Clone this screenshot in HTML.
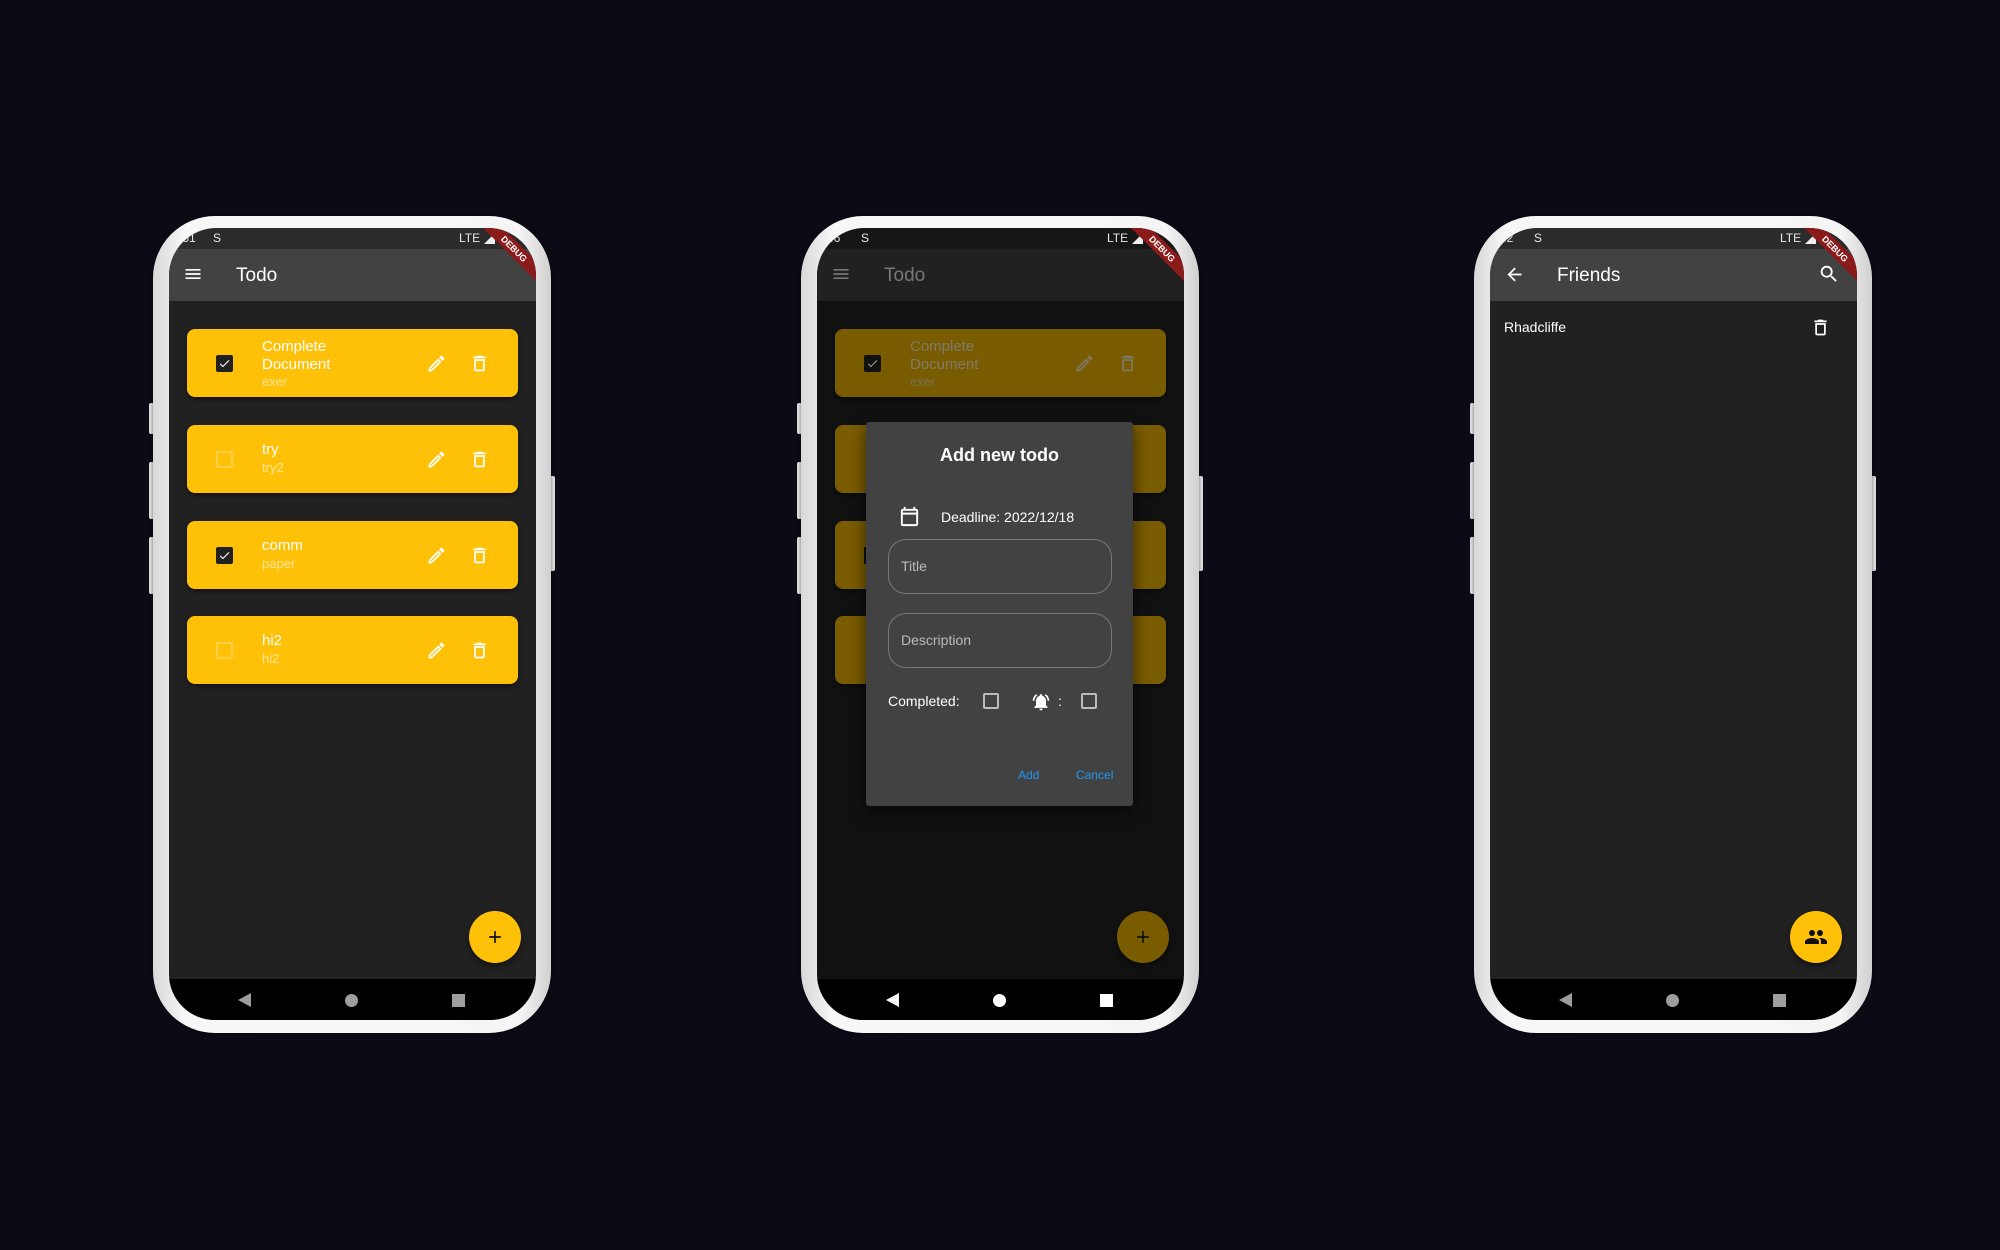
<!DOCTYPE html>
<html><head><meta charset="utf-8"><style>
*{margin:0;padding:0;box-sizing:border-box}
body{width:2000px;height:1250px;background:#0c0b15;position:relative;overflow:hidden;font-family:"Liberation Sans",Roboto,sans-serif}
.ph{position:absolute;top:0;width:700px;height:1250px}
.frame{position:absolute;left:153px;top:216px;width:398px;height:817px;border-radius:62px;background:linear-gradient(90deg,#d8d8d8,#f7f7f7 8%,#f5f5f5 92%,#d0d0d0);box-shadow:0 0 4px rgba(0,0,0,.5)}
.btn{position:absolute;background:#e4e4e4;width:5px;border-radius:2px}
.scr{position:absolute;left:169px;top:228px;width:367px;height:792px;border-radius:48px 48px 46px 46px;overflow:hidden;background:#212121}
.sb{position:absolute;left:0;top:0;width:367px;height:21px;background:#2b2b2b;color:#e8e8e8;font-size:12px}
.ab{position:absolute;left:0;top:21px;width:367px;height:52px;background:#424242;color:#fff}
.ab .t{position:absolute;left:67px;top:16px;font-size:19px}
.nav{position:absolute;left:0;bottom:0;width:367px;height:41px;background:#000}
.card{position:absolute;left:18px;width:331px;height:68px;background:#ffc107;border-radius:8px;box-shadow:0 2px 4px rgba(0,0,0,.5)}
.cb{position:absolute;left:29px;top:26px;width:17px;height:17px;border:2px solid #fff4;border-radius:2px}
.cb.on{background:#212121;border-color:#212121}
.ct{position:absolute;left:75px;color:#fff;font-size:15px;line-height:17.5px}
.cs{color:#fff9;font-size:13px}
.ic{position:absolute;width:21px;height:21px}
.fab{position:absolute;left:300px;top:683px;width:52px;height:52px;border-radius:50%;background:#ffc107;box-shadow:0 3px 6px rgba(0,0,0,.5)}
.dbg{position:absolute;right:-38px;top:14px;width:120px;height:14px;background:#8b1a1a;transform:rotate(45deg);color:#fff;font-size:9px;font-weight:bold;text-align:center;line-height:14px}
</style></head><body>

<!-- PHONE 1 -->
<div class="ph" style="left:0">
<div class="btn" style="left:149px;top:403px;height:31px"></div>
<div class="btn" style="left:149px;top:462px;height:57px"></div>
<div class="btn" style="left:149px;top:537px;height:57px"></div>
<div class="btn" style="left:550px;top:476px;height:95px"></div>
<div class="frame"></div>
<div class="scr">
<div class="sb"><span style="position:absolute;left:10px;top:3px">:51</span><span style="position:absolute;left:44px;top:3px">S</span><span style="position:absolute;left:290px;top:3px">LTE</span><svg style="position:absolute;left:315px;top:5px" width="11" height="11"><path d="M11 0V11H0Z" fill="#eee"/></svg><div style="position:absolute;left:330px;top:4px;width:7px;height:12px;background:#eee"></div></div>
<div class="ab"><svg style="position:absolute;left:14px;top:15px" width="20" height="20" viewBox="0 0 24 24"><path d="M3 18h18v-2H3v2zm0-5h18v-2H3v2zm0-7v2h18V6H3z" fill="#fff"/></svg><div class="t">Todo</div></div>
<div class="dbg">DEBUG</div>
<div class="card" style="top:101px"><div class="cb on"><svg width="13" height="13" viewBox="0 0 24 24"><path d="M9 16.2L4.8 12l-1.4 1.4L9 19 21 7l-1.4-1.4z" fill="#fff"/></svg></div><div class="ct" style="top:9px">Complete<br>Document<br><span class="cs">exer</span></div>
<svg class="ic" style="left:239px;top:24px" viewBox="0 0 24 24"><path d="M3 17.25V21h3.75L17.81 9.94l-3.75-3.75L3 17.25zM5.92 19H5v-.92l9.06-9.06.92.92L5.92 19zM20.71 5.63l-2.34-2.34c-.2-.2-.45-.29-.71-.29s-.51.1-.7.29l-1.83 1.83 3.75 3.75 1.83-1.83c.39-.39.39-1.02 0-1.41z" fill="#fff"/></svg>
<svg class="ic" style="left:282px;top:24px" viewBox="0 0 24 24"><path d="M16 9v10H8V9h8m-1.5-6h-5l-1 1H5v2h14V4h-3.5l-1-1zM18 7H6v12c0 1.1.9 2 2 2h8c1.1 0 2-.9 2-2V7z" fill="#fff"/></svg></div>
<div class="card" style="top:197px"><div class="cb"></div><div class="ct" style="top:16px">try<br><span class="cs">try2</span></div>
<svg class="ic" style="left:239px;top:24px" viewBox="0 0 24 24"><path d="M3 17.25V21h3.75L17.81 9.94l-3.75-3.75L3 17.25zM5.92 19H5v-.92l9.06-9.06.92.92L5.92 19zM20.71 5.63l-2.34-2.34c-.2-.2-.45-.29-.71-.29s-.51.1-.7.29l-1.83 1.83 3.75 3.75 1.83-1.83c.39-.39.39-1.02 0-1.41z" fill="#fff"/></svg>
<svg class="ic" style="left:282px;top:24px" viewBox="0 0 24 24"><path d="M16 9v10H8V9h8m-1.5-6h-5l-1 1H5v2h14V4h-3.5l-1-1zM18 7H6v12c0 1.1.9 2 2 2h8c1.1 0 2-.9 2-2V7z" fill="#fff"/></svg></div>
<div class="card" style="top:293px"><div class="cb on"><svg width="13" height="13" viewBox="0 0 24 24"><path d="M9 16.2L4.8 12l-1.4 1.4L9 19 21 7l-1.4-1.4z" fill="#fff"/></svg></div><div class="ct" style="top:16px">comm<br><span class="cs">paper</span></div>
<svg class="ic" style="left:239px;top:24px" viewBox="0 0 24 24"><path d="M3 17.25V21h3.75L17.81 9.94l-3.75-3.75L3 17.25zM5.92 19H5v-.92l9.06-9.06.92.92L5.92 19zM20.71 5.63l-2.34-2.34c-.2-.2-.45-.29-.71-.29s-.51.1-.7.29l-1.83 1.83 3.75 3.75 1.83-1.83c.39-.39.39-1.02 0-1.41z" fill="#fff"/></svg>
<svg class="ic" style="left:282px;top:24px" viewBox="0 0 24 24"><path d="M16 9v10H8V9h8m-1.5-6h-5l-1 1H5v2h14V4h-3.5l-1-1zM18 7H6v12c0 1.1.9 2 2 2h8c1.1 0 2-.9 2-2V7z" fill="#fff"/></svg></div>
<div class="card" style="top:388px"><div class="cb"></div><div class="ct" style="top:16px">hi2<br><span class="cs">hi2</span></div>
<svg class="ic" style="left:239px;top:24px" viewBox="0 0 24 24"><path d="M3 17.25V21h3.75L17.81 9.94l-3.75-3.75L3 17.25zM5.92 19H5v-.92l9.06-9.06.92.92L5.92 19zM20.71 5.63l-2.34-2.34c-.2-.2-.45-.29-.71-.29s-.51.1-.7.29l-1.83 1.83 3.75 3.75 1.83-1.83c.39-.39.39-1.02 0-1.41z" fill="#fff"/></svg>
<svg class="ic" style="left:282px;top:24px" viewBox="0 0 24 24"><path d="M16 9v10H8V9h8m-1.5-6h-5l-1 1H5v2h14V4h-3.5l-1-1zM18 7H6v12c0 1.1.9 2 2 2h8c1.1 0 2-.9 2-2V7z" fill="#fff"/></svg></div>
<div class="fab"><svg style="position:absolute;left:16px;top:16px" width="20" height="20" viewBox="0 0 24 24"><path d="M19 13h-6v6h-2v-6H5v-2h6V5h2v6h6v2z" fill="#111"/></svg></div>
<div class="nav"><svg style="position:absolute;left:69px;top:14px" width="14" height="14"><path d="M13 0V14L0 7Z" fill="#9e9e9e"/></svg><div style="position:absolute;left:176px;top:15px;width:13px;height:13px;border-radius:50%;background:#9e9e9e"></div><div style="position:absolute;left:283px;top:15px;width:13px;height:13px;background:#9e9e9e"></div></div>
</div></div>

<!-- PHONE 2 -->
<div class="ph" style="left:648px">
<div class="btn" style="left:149px;top:403px;height:31px"></div>
<div class="btn" style="left:149px;top:462px;height:57px"></div>
<div class="btn" style="left:149px;top:537px;height:57px"></div>
<div class="btn" style="left:550px;top:476px;height:95px"></div>
<div class="frame"></div>
<div class="scr" style="background:#111">
<div class="sb" style="background:#161616"><span style="position:absolute;left:10px;top:3px">46</span><span style="position:absolute;left:44px;top:3px">S</span><span style="position:absolute;left:290px;top:3px">LTE</span><svg style="position:absolute;left:315px;top:5px" width="11" height="11"><path d="M11 0V11H0Z" fill="#eee"/></svg><div style="position:absolute;left:330px;top:4px;width:7px;height:12px;background:#eee"></div></div>
<div class="ab" style="background:#212121;color:#777"><svg style="position:absolute;left:14px;top:15px" width="20" height="20" viewBox="0 0 24 24"><path d="M3 18h18v-2H3v2zm0-5h18v-2H3v2zm0-7v2h18V6H3z" fill="#777"/></svg><div class="t">Todo</div></div>
<div class="dbg">DEBUG</div>
<div class="card" style="top:101px;background:#7a5c00"><div class="cb on" style="background:#111;border-color:#111"><svg width="13" height="13" viewBox="0 0 24 24"><path d="M9 16.2L4.8 12l-1.4 1.4L9 19 21 7l-1.4-1.4z" fill="#999"/></svg></div><div class="ct" style="top:9px;color:#7f7a6a">Complete<br>Document<br><span class="cs" style="color:#7a7058">exer</span></div>
<svg class="ic" style="left:239px;top:24px" viewBox="0 0 24 24"><path d="M3 17.25V21h3.75L17.81 9.94l-3.75-3.75L3 17.25zM5.92 19H5v-.92l9.06-9.06.92.92L5.92 19zM20.71 5.63l-2.34-2.34c-.2-.2-.45-.29-.71-.29s-.51.1-.7.29l-1.83 1.83 3.75 3.75 1.83-1.83c.39-.39.39-1.02 0-1.41z" fill="#807866"/></svg>
<svg class="ic" style="left:282px;top:24px" viewBox="0 0 24 24"><path d="M16 9v10H8V9h8m-1.5-6h-5l-1 1H5v2h14V4h-3.5l-1-1zM18 7H6v12c0 1.1.9 2 2 2h8c1.1 0 2-.9 2-2V7z" fill="#807866"/></svg></div>
<div class="card" style="top:197px;background:#7a5c00"></div>
<div class="card" style="top:293px;background:#7a5c00"><div style="position:absolute;left:29px;top:26px;width:17px;height:17px;background:#111"></div></div>
<div class="card" style="top:388px;background:#7a5c00"></div>
<div class="fab" style="background:#7a5c00"><svg style="position:absolute;left:16px;top:16px" width="20" height="20" viewBox="0 0 24 24"><path d="M19 13h-6v6h-2v-6H5v-2h6V5h2v6h6v2z" fill="#111"/></svg></div>
<div class="nav"><svg style="position:absolute;left:69px;top:14px" width="14" height="14"><path d="M13 0V14L0 7Z" fill="#fff"/></svg><div style="position:absolute;left:176px;top:15px;width:13px;height:13px;border-radius:50%;background:#fff"></div><div style="position:absolute;left:283px;top:15px;width:13px;height:13px;background:#fff"></div></div>
<!-- dialog -->
<div style="position:absolute;left:49px;top:194px;width:267px;height:384px;background:#424242;border-radius:3px;box-shadow:0 6px 16px rgba(0,0,0,.6);color:#fff">
<div style="position:absolute;left:0;top:23px;width:267px;text-align:center;font-size:18px;font-weight:600">Add new todo</div>
<svg style="position:absolute;left:32px;top:83px" width="23" height="23" viewBox="0 0 24 24"><path d="M19 4h-1V2h-2v2H8V2H6v2H5c-1.11 0-1.99.9-1.99 2L3 20a2 2 0 002 2h14c1.1 0 2-.9 2-2V6c0-1.1-.9-2-2-2zm0 16H5V10h14v10zm0-12H5V6h14v2z" fill="#fff"/></svg>
<div style="position:absolute;left:75px;top:87px;font-size:14px">Deadline: 2022/12/18</div>
<div style="position:absolute;left:22px;top:117px;width:224px;height:55px;border:1px solid #777;border-radius:18px"><span style="position:absolute;left:12px;top:18px;font-size:14px;color:#bbb">Title</span></div>
<div style="position:absolute;left:22px;top:191px;width:224px;height:55px;border:1px solid #777;border-radius:18px"><span style="position:absolute;left:12px;top:18px;font-size:14px;color:#bbb">Description</span></div>
<div style="position:absolute;left:22px;top:271px;font-size:14px">Completed:</div>
<div style="position:absolute;left:117px;top:271px;width:16px;height:16px;border:2px solid #bbb;border-radius:2px"></div>
<svg style="position:absolute;left:165px;top:270px" width="20" height="20" viewBox="0 0 24 24"><path d="M7.58 4.08L6.15 2.65C3.75 4.48 2.17 7.3 2.030 10.5h2a8.445 8.445 0 013.55-6.42zm12.39 6.42h2c-.15-3.2-1.73-6.02-4.12-7.85l-1.42 1.43a8.495 8.495 0 013.54 6.42zM18 11c0-3.070-1.64-5.64-4.5-6.32V4c0-.83-.67-1.5-1.5-1.5s-1.5.67-1.5 1.5v.68C7.63 5.36 6 7.92 6 11v5l-2 2v1h16v-1l-2-2v-5zm-6 11c.14 0 .27-.01.4-.04.65-.14 1.18-.58 1.44-1.18.1-.24.15-.5.15-.78h-4c.01 1.1.9 2 2.01 2z" fill="#fff"/></svg>
<div style="position:absolute;left:192px;top:271px;font-size:14px">:</div>
<div style="position:absolute;left:215px;top:271px;width:16px;height:16px;border:2px solid #bbb;border-radius:2px"></div>
<div style="position:absolute;left:152px;top:346px;font-size:12px;color:#2196f3">Add</div>
<div style="position:absolute;left:210px;top:346px;font-size:12px;color:#2196f3">Cancel</div>
</div>
</div></div>

<!-- PHONE 3 -->
<div class="ph" style="left:1321px">
<div class="btn" style="left:149px;top:403px;height:31px"></div>
<div class="btn" style="left:149px;top:462px;height:57px"></div>
<div class="btn" style="left:149px;top:537px;height:57px"></div>
<div class="btn" style="left:550px;top:476px;height:95px"></div>
<div class="frame"></div>
<div class="scr">
<div class="sb"><span style="position:absolute;left:10px;top:3px">52</span><span style="position:absolute;left:44px;top:3px">S</span><span style="position:absolute;left:290px;top:3px">LTE</span><svg style="position:absolute;left:315px;top:5px" width="11" height="11"><path d="M11 0V11H0Z" fill="#eee"/></svg><div style="position:absolute;left:330px;top:4px;width:7px;height:12px;background:#eee"></div></div>
<div class="ab"><svg style="position:absolute;left:14px;top:15px" width="21" height="21" viewBox="0 0 24 24"><path d="M20 11H7.83l5.59-5.59L12 4l-8 8 8 8 1.41-1.41L7.83 13H20v-2z" fill="#fff"/></svg><div class="t">Friends</div>
<svg style="position:absolute;left:328px;top:14px" width="22" height="22" viewBox="0 0 24 24"><path d="M15.5 14h-.79l-.28-.27A6.471 6.471 0 0016 9.5 6.5 6.5 0 109.5 16c1.61 0 3.090-.59 4.23-1.570l.27.28v.79l5 4.990L20.49 19l-4.99-5zm-6 0C7.01 14 5 11.99 5 9.5S7.01 5 9.5 5 14 7.01 14 9.5 11.99 14 9.5 14z" fill="#fff"/></svg></div>
<div class="dbg">DEBUG</div>
<div style="position:absolute;left:14px;top:91px;color:#fff;font-size:14px">Rhadcliffe</div>
<svg style="position:absolute;left:320px;top:89px" width="21" height="21" viewBox="0 0 24 24"><path d="M16 9v10H8V9h8m-1.5-6h-5l-1 1H5v2h14V4h-3.5l-1-1zM18 7H6v12c0 1.1.9 2 2 2h8c1.1 0 2-.9 2-2V7z" fill="#fff"/></svg>
<div class="fab"><svg style="position:absolute;left:14px;top:14px" width="24" height="24" viewBox="0 0 24 24"><path d="M16 11c1.66 0 2.99-1.34 2.99-3S17.66 5 16 5c-1.66 0-3 1.34-3 3s1.34 3 3 3zm-8 0c1.66 0 2.99-1.34 2.99-3S9.66 5 8 5C6.34 5 5 6.34 5 8s1.34 3 3 3zm0 2c-2.33 0-7 1.17-7 3.5V19h14v-2.5c0-2.33-4.67-3.5-7-3.5zm8 0c-.29 0-.62.02-.97.05 1.16.84 1.97 1.97 1.97 3.45V19h6v-2.5c0-2.33-4.67-3.5-7-3.5z" fill="#111"/></svg></div>
<div class="nav"><svg style="position:absolute;left:69px;top:14px" width="14" height="14"><path d="M13 0V14L0 7Z" fill="#9e9e9e"/></svg><div style="position:absolute;left:176px;top:15px;width:13px;height:13px;border-radius:50%;background:#9e9e9e"></div><div style="position:absolute;left:283px;top:15px;width:13px;height:13px;background:#9e9e9e"></div></div>
</div></div>

</body></html>
